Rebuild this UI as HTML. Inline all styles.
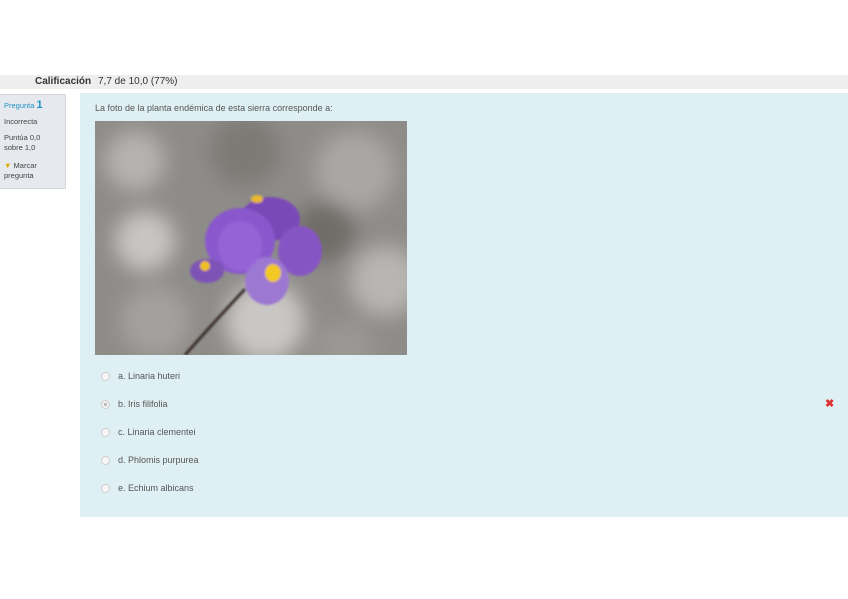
<!DOCTYPE html>
<html><head><meta charset="utf-8"><style>
body{margin:0;width:848px;height:599px;background:#fff;position:relative;overflow:hidden;font-family:"Liberation Sans",sans-serif}
.bar{position:absolute;left:0;top:75px;width:848px;height:14px;background:#eeeeee;font-size:10px;color:#333;line-height:14px}
.side{position:absolute;left:0;top:94px;width:65px;height:93px;background:#e6eaee;border:1px solid #d3d6da;border-left:none;font-size:7.5px;color:#444;border-radius:0 2px 2px 0}
.main{position:absolute;left:80px;top:93px;width:768px;height:424px;background:#dff0f5}
.q{position:absolute;left:15px;top:10px;font-size:9px;color:#555}
.img{position:absolute;left:15px;top:28px;width:312px;height:234px;overflow:hidden}
.opt{position:absolute;left:21px;font-size:9px;color:#555}
.r{display:inline-block;width:7px;height:7px;border:1px solid #ccc;border-radius:50%;background:#f6f6f6;vertical-align:middle;margin-right:8px}
</style></head><body>
<div class="bar"><span style="position:absolute;left:35px;font-weight:bold">Calificación</span><span style="position:absolute;left:98px">7,7 de 10,0 (77%)</span></div>
<div class="side">
<div style="position:absolute;left:4px;top:4px;color:#1e90c8;font-size:7.5px">Pregunta <b style="font-size:11px">1</b></div>
<div style="position:absolute;left:4px;top:22px">Incorrecta</div>
<div style="position:absolute;left:4px;top:38px;line-height:10px">Puntúa 0,0<br>sobre 1,0</div>
<div style="position:absolute;left:4px;top:66px;line-height:10px"><span style="color:#e0a800">▼</span> Marcar<br>pregunta</div>
</div>
<div class="main">
<div class="q">La foto de la planta endémica de esta sierra corresponde a:</div>
<div class="img"><svg width="312" height="234" viewBox="0 0 312 234">
<defs><filter id="b"><feGaussianBlur stdDeviation="10"/></filter><filter id="s"><feGaussianBlur stdDeviation="1"/></filter></defs>
<rect width="312" height="234" fill="#8e8c89"/>
<g filter="url(#b)">
<circle cx="40" cy="40" r="30" fill="#b5b3b0"/><circle cx="150" cy="30" r="35" fill="#7d7a76"/><circle cx="260" cy="50" r="40" fill="#a9a7a4"/>
<circle cx="50" cy="120" r="30" fill="#c8c6c3"/><circle cx="290" cy="160" r="35" fill="#b8b6b3"/><circle cx="60" cy="200" r="35" fill="#a3a19e"/>
<circle cx="170" cy="200" r="40" fill="#c9c7c4"/><circle cx="250" cy="230" r="30" fill="#9a9894"/><circle cx="230" cy="110" r="30" fill="#6f6c68"/>
</g>
<g filter="url(#s)">
<path d="M150 168 Q120 200 90 234" stroke="#3a2f2a" stroke-width="3" fill="none"/>
<ellipse cx="175" cy="98" rx="30" ry="22" fill="#7a48b8"/>
<ellipse cx="145" cy="120" rx="35" ry="33" fill="#8a58cc"/>
<ellipse cx="205" cy="130" rx="22" ry="25" fill="#8654c4"/>
<ellipse cx="112" cy="150" rx="17" ry="12" fill="#7d52b6"/>
<ellipse cx="172" cy="160" rx="22" ry="24" fill="#9c78d2"/>
<ellipse cx="178" cy="152" rx="8" ry="9" fill="#f2c823"/>
<ellipse cx="110" cy="145" rx="5" ry="5" fill="#f0c020"/>
<ellipse cx="162" cy="78" rx="6" ry="4" fill="#e8b830"/>
<ellipse cx="145" cy="125" rx="22" ry="25" fill="#9a68d8" opacity=".7"/>
</g>
</svg></div>
<div class="opt" style="top:278px"><span class="r"></span>a. Linaria huteri</div>
<div class="opt" style="top:306px"><span class="r" style="background:radial-gradient(#bbb 30%,#f6f6f6 40%)"></span>b. Iris filifolia</div>
<div class="opt" style="top:334px"><span class="r"></span>c. Linaria clementei</div>
<div class="opt" style="top:362px"><span class="r"></span>d. Phlomis purpurea</div>
<div class="opt" style="top:390px"><span class="r"></span>e. Echium albicans</div>
<div style="position:absolute;left:745px;top:304px;color:#d33;font-size:11px;font-weight:bold">✖</div>
</div>
</body></html>
